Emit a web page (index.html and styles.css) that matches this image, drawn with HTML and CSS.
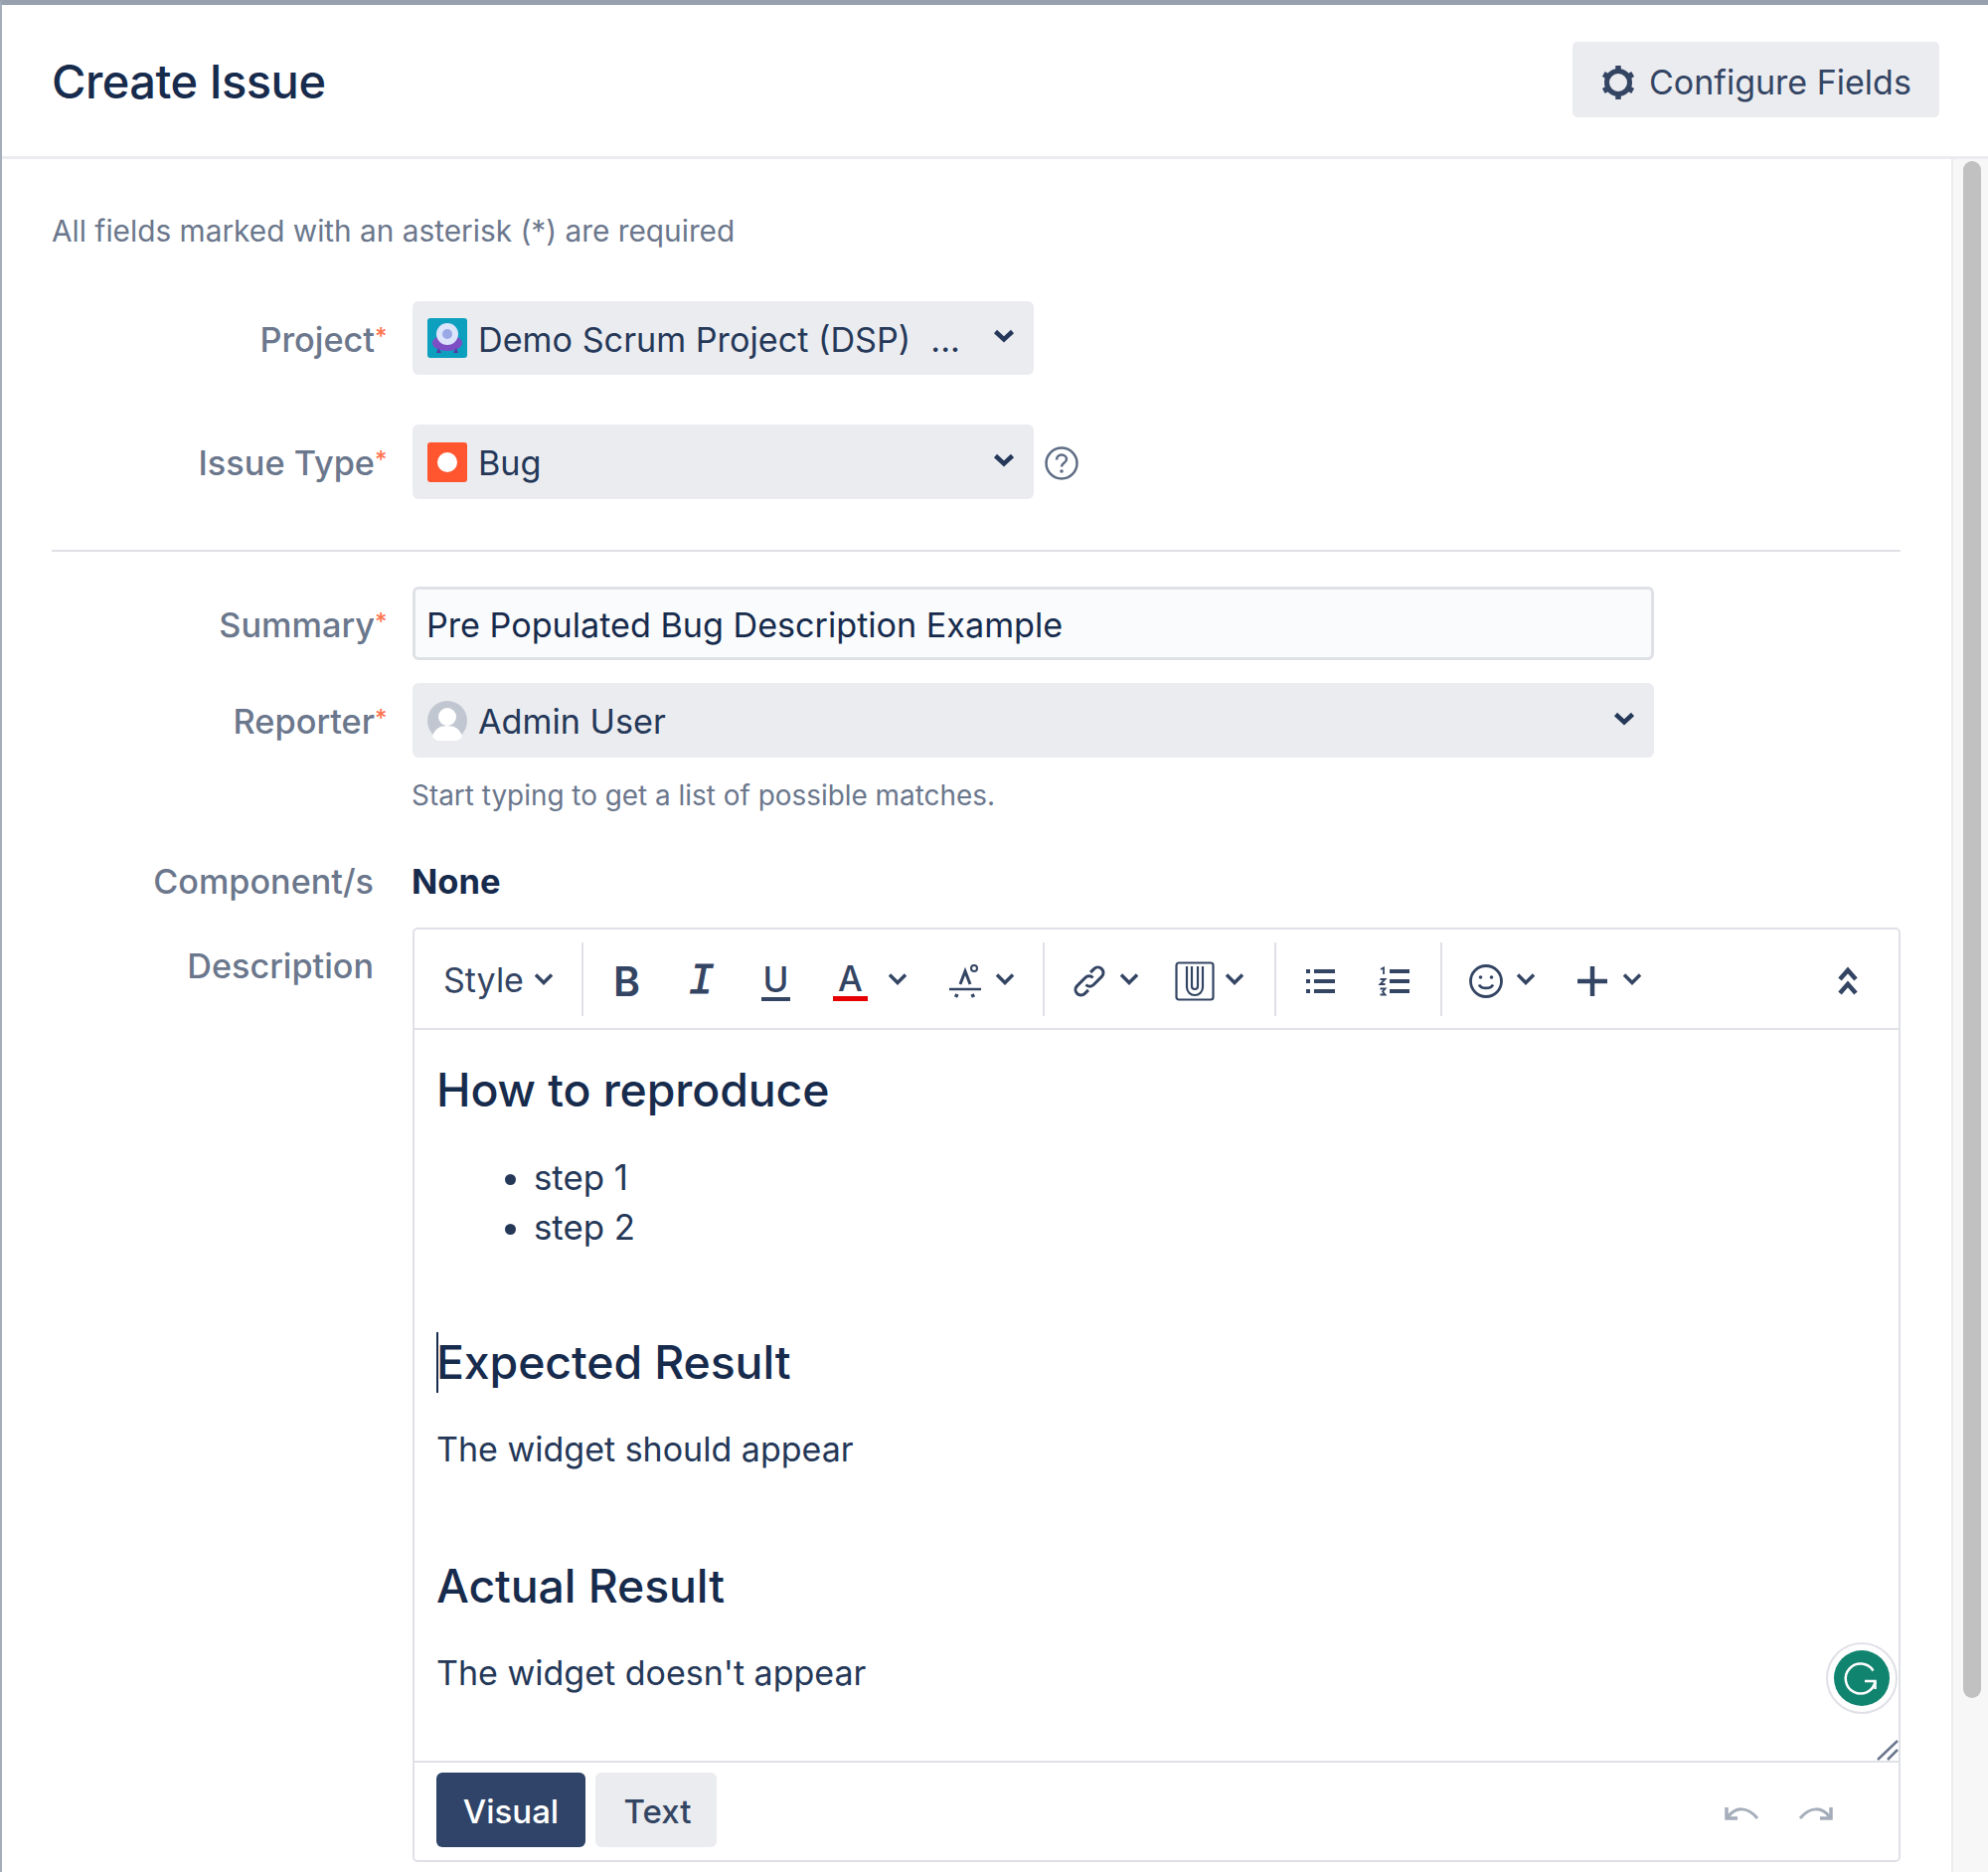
FILE: index.html
```html
<!DOCTYPE html>
<html lang="en">
<head>
<meta charset="utf-8">
<title>Create Issue</title>
<link rel="stylesheet" href="styles.css">
</head>
<body>
<div class="dialog">
  <header class="header">
    <h1 class="title">Create Issue</h1>
    <button class="config-btn" type="button">
      <svg class="gear" viewBox="0 0 36 36" fill="none" stroke="#344563"><circle cx="18" cy="18" r="11.5" stroke-width="5"/><path d="M18 1v6M18 29v6M3.300 9.500l5.200 3M27.500 23.500l5.200 3M3.300 26.500l5.200-3M27.500 12.500l5.200-3" stroke-width="5.500"/></svg>
      <span>Configure Fields</span>
    </button>
  </header>
  <div class="body">
    <main class="content">
      <p class="intro">All fields marked with an asterisk (*) are required</p>

      <div class="row row-project">
        <label class="label">Project<span class="req">*</span></label>
        <div class="select select-short">
          <svg class="avatar" viewBox="0 0 40 40"><rect width="40" height="40" rx="3" fill="#0c9fbe"/><ellipse cx="20" cy="25" rx="15" ry="8" fill="#7d4fc4"/><path d="M11 30l-2 5h5zM29 30l2 5h-5z" fill="#5b35a6"/><circle cx="20" cy="16" r="11" fill="#dbe4fb"/><circle cx="20" cy="16" r="5" fill="#9aa8e6"/></svg>
          <span class="select-text">Demo Scrum Project (DSP)</span>
          <span class="ellipsis">...</span>
          <svg class="chev-lg" viewBox="0 0 22 14" fill="none" stroke="#253858" stroke-width="4.500"><path d="M2.500 2.500L11 10.500l8.500-8"/></svg>
        </div>
      </div>

      <div class="row row-type">
        <label class="label">Issue Type<span class="req">*</span></label>
        <div class="select select-short">
          <svg class="avatar" viewBox="0 0 40 40"><rect width="40" height="40" rx="3" fill="#ff5630"/><circle cx="20" cy="20" r="10" fill="#fff"/></svg>
          <span class="select-text">Bug</span>
          <svg class="chev-lg" viewBox="0 0 22 14" fill="none" stroke="#253858" stroke-width="4.500"><path d="M2.500 2.500L11 10.500l8.500-8"/></svg>
        </div>
        <svg class="help" viewBox="0 0 36 36" fill="none"><circle cx="18" cy="18" r="15.500" stroke="#5e6c84" stroke-width="2.500"/><path d="M13 14.500c0-3 2.200-5 5-5s5 2 5 4.500c0 3.500-5 3.500-5 7.500" stroke="#5e6c84" stroke-width="2.500"/><circle cx="18" cy="26" r="1.800" fill="#5e6c84"/></svg>
      </div>

      <div class="divider"></div>

      <div class="row row-summary">
        <label class="label">Summary<span class="req">*</span></label>
        <div class="input">Pre Populated Bug Description Example</div>
      </div>

      <div class="row row-reporter">
        <label class="label">Reporter<span class="req">*</span></label>
        <div class="select select-wide">
          <svg class="avatar" viewBox="0 0 40 40"><circle cx="20" cy="20" r="20" fill="#c1c7d0"/><circle cx="20" cy="16" r="9" fill="#fff"/><path d="M5 36c2-8 8-11 15-11s13 3 15 11a20 20 0 0 1-30 0z" fill="#fff"/></svg>
          <span class="select-text">Admin User</span>
          <svg class="chev-lg" viewBox="0 0 22 14" fill="none" stroke="#253858" stroke-width="4.500"><path d="M2.500 2.500L11 10.500l8.500-8"/></svg>
        </div>
      </div>
      <p class="helper">Start typing to get a list of possible matches.</p>

      <div class="row row-component">
        <label class="label label-plain">Component/s</label>
        <strong class="value">None</strong>
      </div>

      <div class="row row-description">
        <label class="label label-plain label-desc">Description</label>
        <div class="editor">
          <div class="toolbar">
            <div class="style-group"><span class="style-text">Style</span>
              <svg class="chev" viewBox="0 0 20 14" fill="none" stroke="#344563" stroke-width="3.500"><path d="M2 2.500l8 8 8-8"/></svg>
            </div>
            <span class="sep"></span>
            <span class="tool ml-6 glyph-b">B</span>
            <span class="tool glyph-i">I</span>
            <span class="tool"><span class="glyph-u">U</span></span>
            <span class="tool"><span class="glyph-a">A</span></span>
            <span class="drop"><svg class="chev" viewBox="0 0 20 14" fill="none" stroke="#344563" stroke-width="3.500"><path d="M2 2.500l8 8 8-8"/></svg></span>
            <span class="tool tool-sm ml-28"><svg class="ico" viewBox="0 0 36 36" fill="none" stroke="#344563" stroke-width="3"><path d="M13 21l5-13 5 13"/><circle cx="27" cy="5" r="3" stroke-width="2"/><path d="M2 26h32" stroke-width="2.500"/><path d="M10 31l-1.500 3M25 31l1.500 3" stroke-width="3.500"/></svg></span>
            <span class="drop"><svg class="chev" viewBox="0 0 20 14" fill="none" stroke="#344563" stroke-width="3.500"><path d="M2 2.500l8 8 8-8"/></svg></span>
            <span class="sep ml-28"></span>
            <span class="tool tool-sm ml-15"><svg class="ico" viewBox="0 0 36 36" fill="none" stroke="#344563" stroke-width="3"><g transform="rotate(-45 18 18)"><path d="M23 18a5.500 5.500 0 0 0-5.500-5.500H6a5.500 5.500 0 0 0 0 11h5"/><path d="M13 18a5.500 5.500 0 0 0 5.500 5.500H30a5.500 5.500 0 0 0 0-11h-5"/></g></svg></span>
            <span class="drop"><svg class="chev" viewBox="0 0 20 14" fill="none" stroke="#344563" stroke-width="3.500"><path d="M2 2.500l8 8 8-8"/></svg></span>
            <span class="tool tool-sm ml-26"><svg class="ico ico-tall" viewBox="0 0 40 40" fill="none" stroke="#344563" stroke-width="2.200"><rect x="1.500" y="1.500" width="37" height="37" rx="2.500"/><path d="M12 5v21a8 8 0 0 0 16 0V5"/><path d="M17 5v20a3 3 0 0 0 6 0V5"/></svg></span>
            <span class="drop"><svg class="chev" viewBox="0 0 20 14" fill="none" stroke="#344563" stroke-width="3.500"><path d="M2 2.500l8 8 8-8"/></svg></span>
            <span class="sep ml-30"></span>
            <span class="tool ml-7"><svg class="ico" viewBox="0 0 36 36" fill="none" stroke="#344563"><path d="M11 8h21M11 18h21M11 28h21" stroke-width="4"/><path d="M3 8h4M3 18h4M3 28h4" stroke-width="4"/></svg></span>
            <span class="tool"><svg class="ico" viewBox="0 0 36 36" fill="none" stroke="#344563"><path d="M12 8h20M12 18h20M12 28h20" stroke-width="4"/><path d="M3 6l3-1.500V11M2.500 16h5l-5 5h5M2.500 25.500h5l-2.500 3 2.500 3h-5" stroke-width="1.800"/></svg></span>
            <span class="sep ml-8"></span>
            <span class="tool tool-sm ml-14"><svg class="ico" viewBox="0 0 36 36" fill="none" stroke="#344563" stroke-width="2.800"><circle cx="18" cy="18" r="15.500"/><circle cx="12.500" cy="14" r="1.800" fill="#344563" stroke="none"/><circle cx="23.500" cy="14" r="1.800" fill="#344563" stroke="none"/><path d="M11 21.500c2 4.500 12 4.500 14 0"/></svg></span>
            <span class="drop"><svg class="chev" viewBox="0 0 20 14" fill="none" stroke="#344563" stroke-width="3.500"><path d="M2 2.500l8 8 8-8"/></svg></span>
            <span class="tool tool-sm ml-27"><svg class="ico" viewBox="0 0 36 36" fill="none" stroke="#344563" stroke-width="4.500"><path d="M18 3v30M3 18h30"/></svg></span>
            <span class="drop"><svg class="chev" viewBox="0 0 20 14" fill="none" stroke="#344563" stroke-width="3.500"><path d="M2 2.500l8 8 8-8"/></svg></span>
            <span class="tool tool-sm ml-auto"><svg class="ico" viewBox="0 0 36 36" fill="none" stroke="#344563" stroke-width="4.500"><path d="M10 16l8-9 8 9M10 30l8-9 8 9"/></svg></span>
          </div>
          <div class="doc">
            <h2 class="doc-h"><span>How to reproduce</span></h2>
            <ul class="doc-list">
              <li>step 1</li>
              <li>step 2</li>
            </ul>
            <h2 class="doc-h expected"><span class="caret"></span>Expected Result</h2>
            <p class="doc-p doc-p-tight">The widget should appear</p>
            <h2 class="doc-h actual">Actual Result</h2>
            <p class="doc-p">The widget doesn't appear</p>
            <div class="grammarly"><svg viewBox="0 0 56 56" class="grammarly-mark"><circle cx="28" cy="28" r="28" fill="#11846f"/><path d="M39.500 20.500a15 15 0 1 0 2 11" fill="none" stroke="#fff" stroke-width="2.500"/><path d="M31 31h10.500v8" fill="none" stroke="#fff" stroke-width="2.500"/></svg></div>
            <svg class="resize" viewBox="0 0 22 22" fill="none" stroke="#6b778c" stroke-width="2.500"><path d="M1 21L21 2M11 21l10-10"/></svg>
          </div>
          <div class="editor-foot">
            <span class="mode mode-on">Visual</span>
            <span class="mode mode-off">Text</span>
            <svg class="hist hist-undo" viewBox="0 0 36 20" fill="none" stroke="#a5adba" stroke-width="3.500"><path d="M2 3v11h11"/><path d="M3 13c8-11 20-11 30 1" stroke-width="3"/></svg>
            <svg class="hist hist-redo" viewBox="0 0 36 20" fill="none" stroke="#a5adba" stroke-width="3.500"><path d="M34 3v11H23"/><path d="M33 13C25 2 13 2 3 14" stroke-width="3"/></svg>
          </div>
        </div>
      </div>
    </main>
    <aside class="scrollbar"><div class="thumb"></div></aside>
  </div>
</div>
</body>
</html>
```

FILE: styles.css
```css
* { box-sizing: border-box; }
html, body { margin: 0; padding: 0; }
body {
  width: 2000px;
  height: 1883px;
  overflow: hidden;
  background: #fff;
  color: #172b4d;
  font-family: Inter, "Liberation Sans", sans-serif;
}
.dialog {
  height: 1883px;
  display: flex;
  flex-direction: column;
  border-top: 5px solid #97a0af;
  border-left: 2px solid #a5adba;
}
.header {
  height: 155px;
  flex: none;
  display: flex;
  align-items: center;
  justify-content: space-between;
  padding: 0 49px 0 50px;
  border-bottom: 3px solid #ebecf0;
}
.title { margin: 0; padding-top: 2px; font-size: 47px; font-weight: 500; line-height: 60px; color: #172b4d; letter-spacing: -0.5px; }
.config-btn {
  width: 369px;
  height: 76px;
  margin-top: -2px;
  display: flex;
  align-items: center;
  gap: 13px;
  padding: 6px 0 0 28px;
  border: 0;
  border-radius: 5px;
  background: #ebecf0;
  color: #344563;
  font: 400 34px/40px Inter, "Liberation Sans", sans-serif;
}
.gear { width: 36px; height: 36px; flex: none; }

.body { flex: 1; min-height: 0; display: flex; }
.content { flex: 1; min-width: 0; padding: 52px 51px 0 50px; }
.scrollbar { width: 37px; flex: none; padding: 2px 7px 0 10px; background: #f7f7f7; border-left: 2px solid #ececec; }
.thumb { height: 1546px; border-radius: 9px; background: #c1c1c1; }

.intro { margin: 0; font-size: 29.8px; line-height: 40px; color: #6b778c; }
.row { display: flex; gap: 25px; }
.label {
  flex: none;
  width: 338px;
  text-align: right;
  font-size: 34.3px;
  font-weight: 500;
  line-height: 40px;
  color: #6b778c;
}
.row-project .label, .row-type .label, .row-summary .label, .row-reporter .label { padding-top: 3px; }
.req { display: inline-block; width: 13px; text-align: left; color: #ff7452; font-size: 24px; vertical-align: 7px; line-height: 0; }
.label-plain { padding-right: 14px; font-size: 34.2px; }
.row-project { margin-top: 51px; align-items: center; height: 74px; }
.row-type { margin-top: 50px; align-items: center; height: 75px; }
.divider { height: 2px; margin-top: 51px; background: #dfe1e6; }
.row-summary { margin-top: 35px; height: 74px; align-items: center; }
.row-reporter { margin-top: 23px; height: 75px; align-items: center; }
.row-component { margin-top: 47px; height: 40px; align-items: center; }
.row-description { margin-top: 26px; }
.label-desc { padding-top: 19px; }

.select {
  height: 100%;
  display: flex;
  align-items: center;
  padding: 0 16px 0 15px;
  border-radius: 6px;
  background: #ebecf0;
  color: #253858;
  font-size: 34.2px;
}
.select-short { width: 625px; }
.select-wide { width: 1249px; }
.avatar { width: 40px; height: 40px; flex: none; margin-right: 11px; }
.select-text { line-height: 40px; padding-top: 3px; }
.ellipsis { margin-left: 20px; padding-top: 3px; }
.chev-lg { width: 22px; height: 14px; margin-left: auto; margin-right: 3px; margin-top: -4px; flex: none; }
.help { width: 36px; height: 36px; margin-left: -15px; margin-top: 2px; flex: none; }
.input {
  width: 1249px;
  height: 74px;
  display: flex;
  align-items: center;
  padding: 2px 11px 0;
  border: 3px solid #dfe1e6;
  border-radius: 6px;
  background: #fafbfc;
  color: #172b4d;
  font-size: 34.15px;
}
.helper { margin: 18px 0 0 362px; font-size: 27.9px; line-height: 40px; color: #6b778c; }
.value { margin-left: -1px; font-size: 34.5px; font-weight: 700; line-height: 40px; }

.editor {
  width: 1497px;
  height: 940px;
  display: flex;
  flex-direction: column;
  border: 2px solid #dfe1e6;
  border-radius: 5px;
}
.toolbar {
  height: 101px;
  flex: none;
  display: flex;
  align-items: center;
  padding-right: 21px;
  border-bottom: 2px solid #dfe1e6;
  color: #344563;
}
.style-group { width: 168px; flex: none; display: flex; align-items: center; padding: 3px 0 0 29px; gap: 10px; }
.style-group .chev { margin-top: -3px; }
.style-text { font-size: 34px; line-height: 40px; color: #344563; }
.sep { width: 2px; height: 74px; flex: none; background: #dfe1e6; }
.tool { width: 75px; height: 60px; flex: none; display: flex; align-items: center; justify-content: center; margin-top: 4px; }
.tool-sm { width: 60px; }
.drop { width: 20px; flex: none; display: flex; justify-content: center; margin-top: 1px; }
.chev { width: 20px; height: 14px; flex: none; }
.ico { width: 36px; height: 36px; }
.ico-tall { width: 40px; height: 40px; }
.ml-6 { margin-left: 6px; }
.ml-7 { margin-left: 7px; }
.ml-8 { margin-left: 8px; }
.ml-14 { margin-left: 14px; }
.ml-15 { margin-left: 15px; }
.ml-26 { margin-left: 26px; }
.ml-27 { margin-left: 27px; }
.ml-28 { margin-left: 28px; }
.ml-30 { margin-left: 30px; }
.ml-auto { margin-left: auto; }
.glyph-b { font: 600 41px/40px Inter, "Liberation Sans", sans-serif; }
.glyph-i { font: italic 400 44px/40px "Liberation Mono", monospace; -webkit-text-stroke: 0.8px #344563; }
.glyph-u { font: 500 35px/36px Inter, sans-serif; border-bottom: 4px solid #344563; padding: 0 2px; }
.glyph-a { font: 500 35px/36px Inter, sans-serif; border-bottom: 5px solid #e60000; padding: 0 5px; }

.doc { position: relative; flex: 1; min-height: 0; padding: 30px 0 0 22px; }
.doc-h { margin: 0; font-size: 46.4px; font-weight: 500; line-height: 60px; color: #172b4d; letter-spacing: -0.1px; }
.doc-list { margin: 33px 0 0; padding: 0 0 0 98px; font-size: 34.8px; line-height: 50px; color: #253858; }
.doc-p { margin: 33px 0 0; font-size: 34px; line-height: 50px; color: #253858; }
.doc-p-tight { margin-top: 32px; }
.expected { margin-top: 81px; }
.actual { margin-top: 82px; }
.caret { display: inline-block; width: 2px; height: 61px; margin-right: -2px; background: #172b4d; vertical-align: -14px; }
.grammarly {
  position: absolute;
  top: 616px;
  right: 1px;
  width: 72px;
  height: 72px;
  display: flex;
  align-items: center;
  justify-content: center;
  border: 2px solid #dfe1e6;
  border-radius: 50%;
  background: #fff;
}
.grammarly-mark { width: 56px; height: 56px; }
.resize { position: absolute; right: 0; bottom: 0; width: 22px; height: 22px; }
.editor-foot { height: 100px; flex: none; display: flex; align-items: flex-start; padding: 10px 0 0 22px; border-top: 2px solid #dfe1e6; }
.mode { height: 75px; display: flex; align-items: center; justify-content: center; padding-top: 2px; border-radius: 6px; font-size: 33px; font-weight: 500; }
.mode-on { width: 150px; background: #2f4468; color: #fff; }
.mode-off { width: 122px; margin-left: 10px; padding-left: 3px; background: #ebecf0; color: #344563; }
.hist { width: 36px; height: 20px; flex: none; margin-top: 32px; }
.hist-undo { margin-left: auto; }
.hist-redo { margin-left: 37px; margin-right: 66px; }
```
